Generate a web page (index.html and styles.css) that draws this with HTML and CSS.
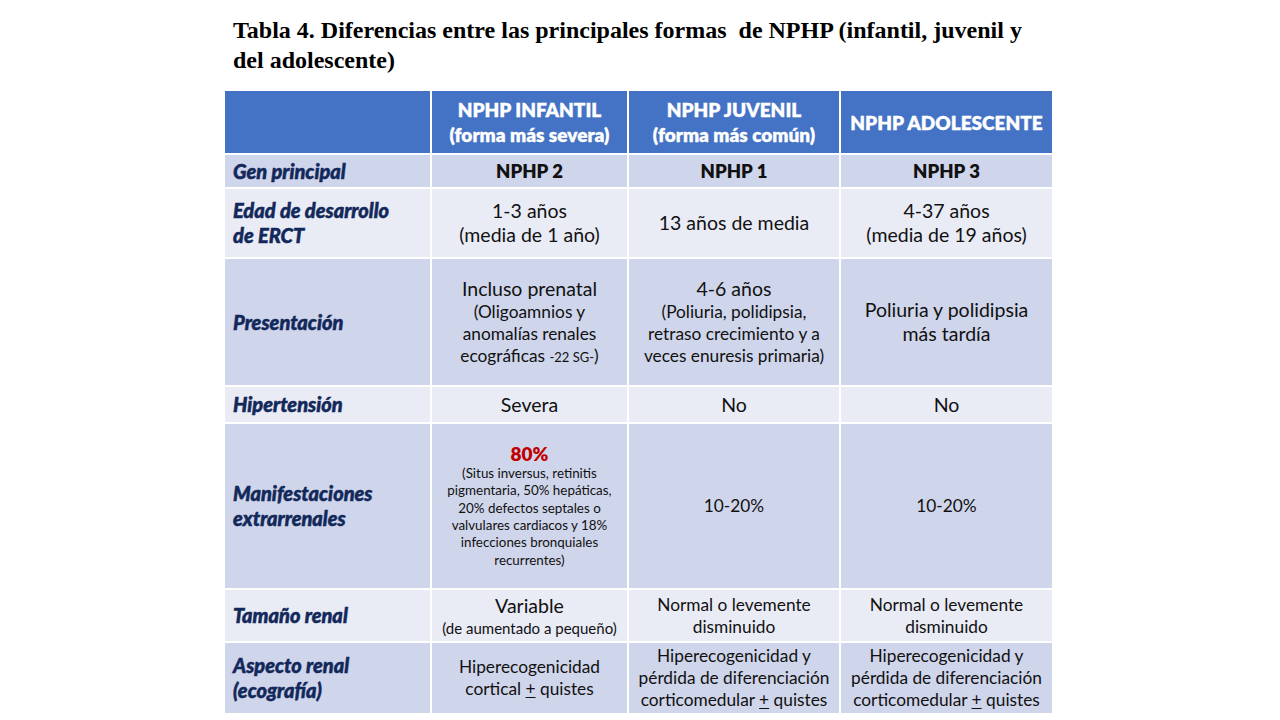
FILE: index.html
```html
<!DOCTYPE html>
<html lang="es">
<head>
<meta charset="utf-8">
<title>Tabla 4</title>
<link rel="stylesheet" href="styles.css">
</head>
<body>
<div class="page">
  <h1 class="title">Tabla 4. Diferencias entre las principales formas&nbsp; de NPHP (infantil, juvenil y del adolescente)</h1>
  <div class="table">
    <div class="cell head"></div>
    <div class="cell head"><div>NPHP INFANTIL<br>(forma más severa)</div></div>
    <div class="cell head"><div>NPHP JUVENIL<br>(forma más común)</div></div>
    <div class="cell head"><div>NPHP ADOLESCENTE</div></div>

    <div class="cell label dark"><div>Gen principal</div></div>
    <div class="cell dark bold"><div>NPHP 2</div></div>
    <div class="cell dark bold"><div>NPHP 1</div></div>
    <div class="cell dark bold"><div>NPHP 3</div></div>

    <div class="cell label light"><div>Edad de desarrollo<br>de ERCT</div></div>
    <div class="cell light big"><div>1-3 años<br>(media de 1 año)</div></div>
    <div class="cell light big"><div>13 años de media</div></div>
    <div class="cell light big"><div>4-37 años<br>(media de 19 años)</div></div>

    <div class="cell label dark"><div>Presentación</div></div>
    <div class="cell dark"><div><div class="big">Incluso prenatal</div><div class="mid">(Oligoamnios y<br>anomalías renales<br>ecográficas <span class="tiny">-22 SG-</span>)</div></div></div>
    <div class="cell dark"><div><div class="big">4-6 años</div><div class="mid">(Poliuria, polidipsia,<br>retraso crecimiento y a<br>veces enuresis primaria)</div></div></div>
    <div class="cell dark big"><div>Poliuria y polidipsia<br>más tardía</div></div>

    <div class="cell label light"><div>Hipertensión</div></div>
    <div class="cell light big"><div>Severa</div></div>
    <div class="cell light big"><div>No</div></div>
    <div class="cell light big"><div>No</div></div>

    <div class="cell label dark"><div>Manifestaciones<br>extrarrenales</div></div>
    <div class="cell dark"><div><div class="red">80%</div><div class="small">(Situs inversus, retinitis<br>pigmentaria, 50% hepáticas,<br>20% defectos septales o<br>valvulares cardiacos y 18%<br>infecciones bronquiales<br>recurrentes)</div></div></div>
    <div class="cell dark mid"><div>10-20%</div></div>
    <div class="cell dark mid"><div>10-20%</div></div>

    <div class="cell label light"><div>Tamaño renal</div></div>
    <div class="cell light"><div><div class="big">Variable</div><div class="note">(de aumentado a pequeño)</div></div></div>
    <div class="cell light mid"><div>Normal o levemente<br>disminuido</div></div>
    <div class="cell light mid"><div>Normal o levemente<br>disminuido</div></div>

    <div class="cell label dark"><div>Aspecto renal<br>(ecografía)</div></div>
    <div class="cell dark mid"><div>Hiperecogenicidad<br>cortical <u>+</u> quistes</div></div>
    <div class="cell dark mid"><div>Hiperecogenicidad y<br>pérdida de diferenciación<br>corticomedular <u>+</u> quistes</div></div>
    <div class="cell dark mid"><div>Hiperecogenicidad y<br>pérdida de diferenciación<br>corticomedular <u>+</u> quistes</div></div>
  </div>
</div>
</body>
</html>
```

FILE: styles.css
```css
html, body {
  margin: 0;
  padding: 0;
  background: #ffffff;
}

.page {
  width: 1280px;
  height: 720px;
  overflow: hidden;
  display: flex;
  flex-direction: column;
  padding-left: 225px;
  box-sizing: border-box;
}

.title {
  font-family: "Liberation Serif", "Times New Roman", serif;
  font-weight: bold;
  font-size: 24px;
  line-height: 30px;
  color: #000;
  margin: 15px 0 0 8px;
  width: 800px;
}

.table {
  margin-top: 16px;
  display: grid;
  grid-template-columns: 205px 195px 210px 211px;
  grid-template-rows: 62px 32px 68px 126px 35px 164px 51px 70px;
  gap: 2px;
  width: 827px;
  background: #ffffff;
  font-family: Lato, "Open Sans", sans-serif;
  color: #111;
}

.cell {
  display: flex;
  align-items: center;
  justify-content: center;
  text-align: center;
  font-size: 17px;
  line-height: 22px;
}

.head {
  background: #4472c4;
  color: #ffffff;
  font-weight: 800;
  font-size: 19px;
  line-height: 25px;
  -webkit-text-stroke: 0.3px #ffffff;
}

.dark { background: #cfd5ea; }
.light { background: #e9ebf5; }

.label {
  justify-content: flex-start;
  text-align: left;
  padding-left: 8px;
  color: #12285a;
  font-weight: 900;
  font-style: italic;
  font-size: 20px;
  line-height: 25px;
  -webkit-text-stroke: 0.5px #12285a;
}

.bold { font-weight: 800; font-size: 18.5px; }
.big { font-size: 19.5px; line-height: 24px; }
.mid { font-size: 17.3px; line-height: 22px; }
.small { font-size: 13.4px; line-height: 17.3px; }
.note { font-size: 15px; line-height: 20px; }
.tiny { font-size: 13px; }

.red {
  color: #c00000;
  font-weight: 800;
  font-size: 19px;
  line-height: 22px;
}

u { text-decoration-thickness: 1px; text-underline-offset: 2px; }
```
